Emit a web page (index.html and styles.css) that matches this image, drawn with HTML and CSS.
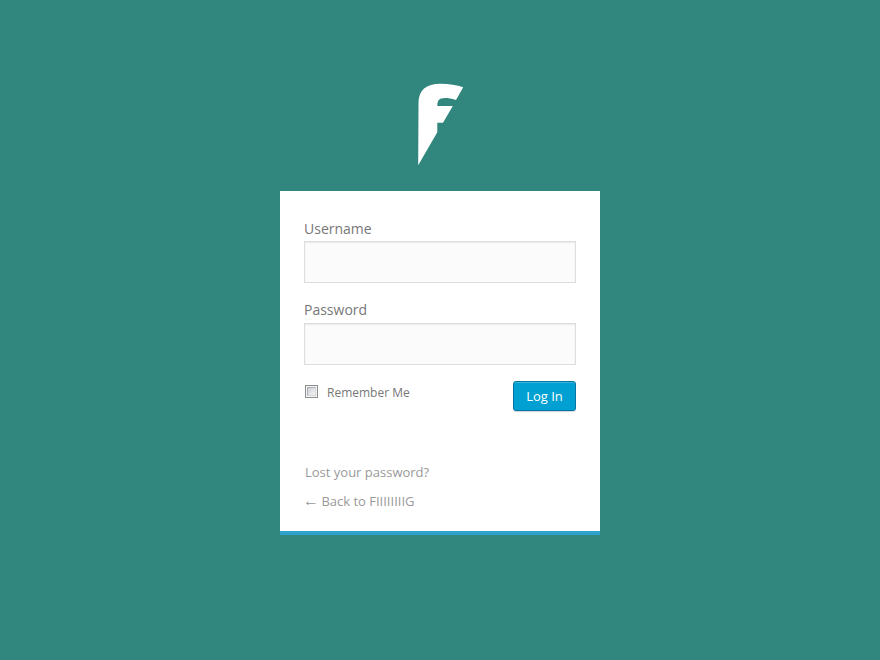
FILE: index.html
```html
<!DOCTYPE html>
<html lang="en">
<head>
<meta charset="utf-8">
<title>Log In</title>
<link rel="stylesheet" href="styles.css">
</head>
<body>
<main class="login">
  <svg class="logo" width="46" height="82" viewBox="418 83 46 82" aria-hidden="true"><path fill="#fff" d="M418.200 165.300L418.500 103C418.600 90 426 83.800 440.500 83.800C449 83.800 457 85 463.200 87.200L456 100C449 97.800 444.500 97.500 441 98.600C438.300 99.500 437.300 102 437.300 106H452.800L443 122.700H437.300V132.200Z"/></svg>
  <div class="card">
    <form>
      <label class="field">Username<input type="text"></label>
      <label class="field">Password<input type="password"></label>
      <div class="actions">
        <label class="remember"><input type="checkbox">Remember Me</label>
        <button type="button">Log In</button>
      </div>
    </form>
    <nav>
      <a>Lost your password?</a>
      <a><span class="arrow">←</span> Back to FIIIIIIIIG</a>
    </nav>
  </div>
</main>
</body>
</html>
```

FILE: styles.css
```css
*, *::before { box-sizing: border-box; }
body {
  margin: 0;
  min-height: 660px;
  background: #31877d;
  font-family: "Open Sans", sans-serif;
  color: #777;
}
.login {
  width: 320px;
  margin: 0 auto;
  padding-top: 83px;
}
.logo { display: block; overflow: visible; margin: 0 auto 26px 138px; }
.card {
  height: 344px;
  padding: 28px 24px 0;
  background: #fff;
  border-bottom: 4px solid #2ea2cc;
}
.field {
  display: block;
  height: 82px;
  font-size: 14px;
  line-height: 20px;
}
.field + .field { height: 80px; margin-top: -1px; }
.field input {
  display: block;
  width: 272px;
  height: 42px;
  margin: 2px 0 0;
  border: 1px solid #ddd;
  border-radius: 0;
  background: #fbfbfb;
  box-shadow: inset 0 1px 2px rgba(0, 0, 0, .07);
  outline: 0;
}
.field + .field input { margin-top: 3px; }
.actions {
  display: flex;
  justify-content: space-between;
  align-items: flex-start;
  height: 82px;
  margin-top: 1px;
}
.remember {
  display: flex;
  align-items: flex-start;
  font-size: 12px;
  line-height: 18px;
  padding-top: 3px;
}
.remember input {
  appearance: none;
  width: 13px;
  height: 13px;
  margin: 1px 9px 0 1px;
  border: 1px solid #8e8f8f;
  background: #f4f4f4;
  padding: 1px;
}
.remember input::before {
  content: "";
  display: block;
  width: 9px;
  height: 9px;
  border: 1px solid;
  border-color: #aeb3b9 #d5d5d8 #d5d5d8 #aeb3b9;
  background: linear-gradient(135deg, #cbcfd5, #f6f6f6);
}
button {
  width: 63px;
  height: 30px;
  padding: 0;
  border: 1px solid #0074a2;
  border-radius: 3px;
  background: #00a0d2;
  box-shadow: inset 0 1px 0 rgba(120, 200, 230, .5), 0 1px 0 rgba(0, 0, 0, .15);
  color: #fff;
  font: 13px/28px "Open Sans", sans-serif;
}
nav {
  display: flex;
  flex-direction: column;
  gap: 11px;
  padding-left: 1px;
  font-size: 13px;
  line-height: 18px;
  color: #999;
}
.arrow {
  display: inline-block;
  width: 13px;
  height: 18px;
  vertical-align: top;
  font-family: "Liberation Sans", sans-serif;
  font-size: 16px;
  text-indent: -2px;
}
```
